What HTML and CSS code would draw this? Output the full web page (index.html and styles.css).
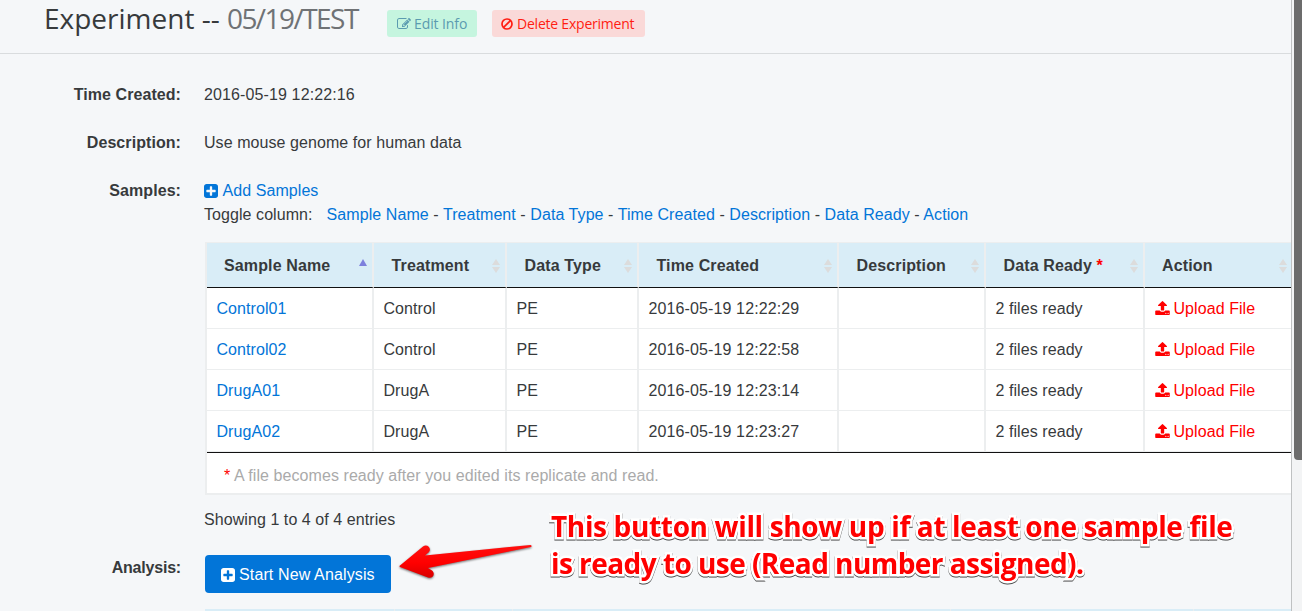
FILE: index.html
```
<!DOCTYPE html>
<html lang="en">
<head>
<meta charset="utf-8">
<title>Experiment</title>
<link rel="stylesheet" href="styles.css">
</head>
<body>
<svg class="defs" width="0" height="0" aria-hidden="true">
  <symbol id="plus" viewBox="128 128 1536 1536"><path d="M1408 960v-128q0-26-19-45t-45-19h-320v-320q0-26-19-45t-45-19h-128q-26 0-45 19t-19 45v320h-320q-26 0-45 19t-19 45v128q0 26 19 45t45 19h320v320q0 26 19 45t45 19h128q26 0 45-19t19-45v-320h320q26 0 45-19t19-45zm256-544v960q0 119-84.5 203.5t-203.5 84.5h-960q-119 0-203.5-84.5t-84.5-203.5v-960q0-119 84.5-203.5t203.5-84.5h960q119 0 203.5 84.5t84.5 203.5z"/></symbol>
  <symbol id="upload" viewBox="64 64 1664 1600"><path d="M1344 1472q0-26-19-45t-45-19-45 19-19 45 19 45 45 19 45-19 19-45zm256 0q0-26-19-45t-45-19-45 19-19 45 19 45 45 19 45-19 19-45zm128-224v320q0 40-28 68t-68 28h-1472q-40 0-68-28t-28-68v-320q0-40 28-68t68-28h427q21 56 70.5 92t110.5 36h256q61 0 110.5-36t70.5-92h427q40 0 68 28t28 68zm-325-648q-17 40-59 40h-256v448q0 26-19 45t-45 19h-256q-26 0-45-19t-19-45v-448h-256q-42 0-59-40-17-39 14-69l448-448q18-19 45-19t45 19l448 448q31 30 14 69z"/></symbol>
  <symbol id="edit" viewBox="0 0 1792 1792"><path d="M888 1184l116-116-152-152-116 116v56h96v96h56zm440-720q-16-16-33 1l-350 350q-17 17-1 33t33-1l350-350q17-17 1-33zm80 594v190q0 119-84.5 203.5t-203.5 84.5h-832q-119 0-203.5-84.5t-84.5-203.5v-832q0-119 84.5-203.5t203.5-84.5h832q63 0 117 25 15 7 18 23 3 17-9 29l-49 49q-14 14-32 8-23-6-45-6h-832q-66 0-113 47t-47 113v832q0 66 47 113t113 47h832q66 0 113-47t47-113v-126q0-13 9-22l64-64q15-15 35-7t20 29zm-96-738l288 288-672 672h-288v-288zm444 132l-92 92-288-288 92-92q28-28 68-28t68 28l152 152q28 28 28 68t-28 68z"/></symbol>
  <symbol id="ban" viewBox="0 0 12 12"><circle cx="6" cy="6" r="5" fill="none" stroke="currentColor" stroke-width="1.7"/><path d="M2.6 9.4 9.4 2.6" stroke="currentColor" stroke-width="1.7"/></symbol>
  <symbol id="sort" viewBox="0 0 8 14"><path d="M4 0 8 6H0zM0 8h8L4 14z"/></symbol>
  <symbol id="asc" viewBox="0 0 8 14"><path d="M4 0 8 7H0z"/></symbol>
</svg>
<div class="window">
  <main class="page">
    <header class="head">
      <h1 class="title">Experiment -- <span class="title-name">05/19/TEST</span></h1>
      <a class="tag tag-edit"><svg class="i-edit"><use href="#edit"/></svg>Edit Info</a>
      <a class="tag tag-delete"><svg class="i-ban"><use href="#ban"/></svg>Delete Experiment</a>
    </header>
    <div class="details">
      <div class="label">Time Created:</div>
      <div class="value t-date">2016-05-19 12:22:16</div>
      <div class="label">Description:</div>
      <div class="value">Use mouse genome for human data</div>
      <div class="label">Samples:</div>
      <div class="value samples">
        <div><a class="link"><svg class="i-plus"><use href="#plus"/></svg>Add Samples</a></div>
        <div class="toggle"><span class="toggle-label">Toggle column:</span><a class="link">Sample Name</a> - <a class="link">Treatment</a> - <a class="link">Data Type</a> - <a class="link">Time Created</a> - <a class="link">Description</a> - <a class="link">Data Ready</a> - <a class="link">Action</a></div>
        <table class="grid">
          <colgroup><col class="c1"><col class="c2"><col class="c3"><col class="c4"><col class="c5"><col class="c6"><col class="c7"></colgroup>
          <thead><tr>
            <th><div class="th">Sample Name<svg class="i-sort i-asc"><use href="#asc"/></svg></div></th>
            <th><div class="th">Treatment<svg class="i-sort"><use href="#sort"/></svg></div></th>
            <th><div class="th">Data Type<svg class="i-sort"><use href="#sort"/></svg></div></th>
            <th><div class="th">Time Created<svg class="i-sort"><use href="#sort"/></svg></div></th>
            <th><div class="th">Description<svg class="i-sort"><use href="#sort"/></svg></div></th>
            <th><div class="th"><span>Data Ready <span class="red">*</span></span><svg class="i-sort"><use href="#sort"/></svg></div></th>
            <th><div class="th">Action<svg class="i-sort"><use href="#sort"/></svg></div></th>
          </tr></thead>
          <tbody>
            <tr><td><a class="link">Control01</a></td><td>Control</td><td>PE</td><td class="t-date">2016-05-19 12:22:29</td><td></td><td>2 files ready</td><td><a class="red upload"><svg class="i-upload"><use href="#upload"/></svg>Upload File</a></td></tr>
            <tr><td><a class="link">Control02</a></td><td>Control</td><td>PE</td><td class="t-date">2016-05-19 12:22:58</td><td></td><td>2 files ready</td><td><a class="red upload"><svg class="i-upload"><use href="#upload"/></svg>Upload File</a></td></tr>
            <tr><td><a class="link">DrugA01</a></td><td>DrugA</td><td>PE</td><td class="t-date">2016-05-19 12:23:14</td><td></td><td>2 files ready</td><td><a class="red upload"><svg class="i-upload"><use href="#upload"/></svg>Upload File</a></td></tr>
            <tr><td><a class="link">DrugA02</a></td><td>DrugA</td><td>PE</td><td class="t-date">2016-05-19 12:23:27</td><td></td><td>2 files ready</td><td><a class="red upload"><svg class="i-upload"><use href="#upload"/></svg>Upload File</a></td></tr>
          </tbody>
          <tfoot><tr><td colspan="7"><span class="red">*</span> A file becomes ready after you edited its replicate and read.</td></tr></tfoot>
        </table>
        <div class="info">Showing 1 to 4 of 4 entries</div>
      </div>
      <div class="label label-tight">Analysis:</div>
      <div class="value analysis">
        <a class="button"><svg class="i-plus"><use href="#plus"/></svg>Start New Analysis</a>
        <div class="next-table"><span class="n1"></span><span class="n2"></span><span class="n3"></span><span class="n4"></span></div>
      </div>
    </div>
  </main>
  <div class="scrollbar"><div class="thumb"></div></div>
  <svg class="arrow" viewBox="0 0 140 44">
    <defs><linearGradient id="red" x1="0" y1="0" x2="0" y2="1"><stop offset="0" stop-color="#ff1010"/><stop offset=".55" stop-color="#f00"/><stop offset="1" stop-color="#d80000"/></linearGradient></defs>
    <path fill="url(#red)" d="M4 20.500 27 1.500C31-1.500 36 3 33 7L29 10.500 134.500-.1Q136.500 1 135 2L32 23 36 25.500C40 29 36.500 34 32 32.500L4 22Q3 21 4 20.500Z"/>
  </svg>
  <p class="note"><span class="n-line1">This button will show up if at least one sample file</span><br><span class="n-line2">is ready to use (Read number assigned).</span></p>
</div>
</body>
</html>
```
FILE: styles.css
```
* { box-sizing: border-box; }
body { margin: 0; font: 16px/24px "Liberation Sans", Arial, sans-serif; letter-spacing: .07px; color: #373a3c; background: #f5f7f9; }
.defs { position: absolute; }
svg { fill: currentColor; flex: none; }
.window { position: relative; display: flex; width: 1302px; height: 611px; overflow: hidden; }
.page { flex: 1; overflow: hidden; min-width: 0; }
.head { display: flex; align-items: flex-start; height: 54px; padding-left: 44px; border-bottom: 1px solid #d9dcde; font-family: "Open Sans", sans-serif; letter-spacing: 0; }
.title { margin: 0; width: 343px; font-size: 28px; font-weight: 400; line-height: 36px; white-space: nowrap; }
.title-name { color: #6f7275; letter-spacing: -1.55px; }
.tag { display: flex; align-items: center; height: 27px; margin-top: 10px; border-radius: 3px; font-size: 14px; white-space: nowrap; }
.tag-edit { width: 90px; padding-left: 10px; gap: 3px; background: #c5f5df; color: #5b9bb0; letter-spacing: -.1px; }
.tag-delete { width: 153px; margin-left: 15px; padding-left: 9px; gap: 4px; background: #fad9d8; color: #ff1d12; letter-spacing: -.22px; }
.i-edit { width: 14px; height: 14px; }
.i-ban { width: 12px; height: 12px; }
.details { display: grid; grid-template-columns: 181px 1fr; column-gap: 23px; padding-top: 29px; }
.label { font-weight: 700; text-align: right; }
.label-tight { letter-spacing: -.2px; }
.value { height: 48px; white-space: nowrap; min-width: 0; }
.t-date { letter-spacing: .12px; }
.samples { height: 377px; }
.link { color: #0275d8; }
.i-plus { width: 14px; height: 14px; margin-right: 4.500px; vertical-align: -2px; }
.toggle-label { margin-right: 14px; }
.grid { table-layout: fixed; width: 1087px; margin: 15px 0 0 1px; border: 0 solid #eceeef; border-width: 1px 0 2px 2px; border-spacing: 0; background: #fff; }
.c1 { width: 167px; } .c2 { width: 133px; } .c3 { width: 132px; } .c4 { width: 200px; } .c5 { width: 147px; } .c6 { width: 159px; } .c7 { width: 147px; }
th { height: 45px; padding: 2px 5.500px 0 17.500px; text-align: left; letter-spacing: .13px; background: #d9edf7; border-right: 2px solid #eceeef; border-bottom: 1px solid #111; }
th:first-child { padding-left: 17px; }
th:last-child { padding: 2px 5px 0 17px; }
th:last-child, td:last-child { border-right: 0; }
.th { display: flex; justify-content: space-between; align-items: center; }
.i-sort { width: 8px; height: 14px; color: #dcdcdc; margin-top: -1px; }
.i-asc { color: #7d80dd; }
tbody td { height: 41px; padding: 2px 0 0 9.500px; border-right: 2px solid #eceeef; border-bottom: 1px solid #eceeef; }
tfoot td { height: 41px; padding: 6px 0 0 17px; border-top: 1px solid #111; color: #aaa; }
.red { color: #f00; }
.i-upload { width: 15px; height: 14px; margin-right: 4px; vertical-align: -1px; }
.info { margin-top: 13px; }
.analysis { height: 60px; }
.button { display: flex; align-items: center; width: 186px; height: 38px; margin: -1px 0 0 1px; padding: 1px 0 0 16px; background: #0275d8; border-radius: 4px; color: #fff; letter-spacing: .13px; }
.button .i-plus { margin: 0 4px 0 0; }
.next-table { display: flex; height: 4px; margin: 16px 0 0 1px; background: #d9edf7; }
.next-table span { border-right: 1px solid #eceeef; }
.n1 { width: 190px; } .n2 { width: 118px; } .n3 { width: 438px; } .n4 { width: 243px; }
.scrollbar { width: 11px; border-left: 1px solid #bfc1c2; background: #f3f4f5; padding-left: 2px; }
.thumb { height: 460px; background: #6c6c6c; border-radius: 0 0 0 4px; }
.arrow { position: absolute; left: 396px; top: 545px; width: 140px; height: 44px; overflow: visible; filter: drop-shadow(0 1px 1px rgba(0,0,0,.55)); }
.note { position: absolute; left: 551px; top: 508px; margin: 0; font: 700 28px/37px "Open Sans", sans-serif; color: #f00; white-space: nowrap; -webkit-text-stroke: 5px #fff; paint-order: stroke fill; filter: drop-shadow(0 1px .5px rgba(0,0,0,.7)); }
.n-line1 { letter-spacing: -.35px; }
.n-line2 { letter-spacing: -.55px; }
```
